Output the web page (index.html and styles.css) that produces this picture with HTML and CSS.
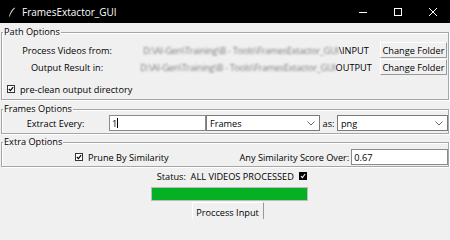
FILE: index.html
```html
<!DOCTYPE html>
<html>
<head>
<meta charset="utf-8">
<link rel="stylesheet" href="styles.css">
</head>
<body>
<div class="window">
  <div class="titlebar">
    <svg class="app-icon" width="8" height="10" viewBox="0 0 8 10"><path d="M6.5 0.5 C4 2 2 5 1 9.5 L1.8 9.5 C2.6 6.5 4.5 3.5 7 1.2 Z" fill="#cfd8e6"/></svg>
    <span class="title">FramesExtactor_GUI</span>
    <div class="controls">
      <span class="ctl"><svg width="10" height="10" viewBox="0 0 10 10"><path d="M1 5.5 H9" stroke="#fff" stroke-width="1"/></svg></span>
      <span class="ctl"><svg width="10" height="10" viewBox="0 0 10 10"><rect x="1.5" y="1.5" width="7" height="7" fill="none" stroke="#fff" stroke-width="1"/></svg></span>
      <span class="ctl"><svg width="10" height="10" viewBox="0 0 10 10"><path d="M1 1 L9 9 M9 1 L1 9" stroke="#fff" stroke-width="1"/></svg></span>
    </div>
  </div>

  <fieldset class="group group-path">
    <legend>Path Options</legend>
    <div class="path-grid">
      <span class="lbl">Process Videos from:</span>
      <span class="path"><span class="blur">D:\AI-Gen\Training\B - Tools\FramesExtactor_GUI</span>\INPUT</span>
      <span class="btn">Change Folder</span>
      <span class="lbl">Output Result in:</span>
      <span class="path"><span class="blur">D:\AI-Gen\Training\B - Tools\FramesExtactor_GUI</span>OUTPUT</span>
      <span class="btn">Change Folder</span>
    </div>
    <div class="check-row clean-row"><span class="cb"><svg width="7" height="7" viewBox="0 0 7 7"><path d="M1 3.5 L2.8 5.4 L6 1.2" fill="none" stroke="#000" stroke-width="1.4"/></svg></span>pre-clean output directory</div>
  </fieldset>

  <fieldset class="group group-frames">
    <legend>Frames Options</legend>
    <div class="frames-row">
      <span class="lbl extract-lbl">Extract Every:</span>
      <span class="entry extract-entry">1<span class="caret"></span></span>
      <span class="combo frames-combo">Frames<svg class="chev" width="8" height="5" viewBox="0 0 8 5"><path d="M0.5 0.5 L4 4 L7.5 0.5" fill="none" stroke="#555" stroke-width="0.9"/></svg></span>
      <span class="as-lbl">as:</span>
      <span class="combo png-combo">png<svg class="chev" width="8" height="5" viewBox="0 0 8 5"><path d="M0.5 0.5 L4 4 L7.5 0.5" fill="none" stroke="#555" stroke-width="0.9"/></svg></span>
    </div>
  </fieldset>

  <fieldset class="group group-extra">
    <legend>Extra Options</legend>
    <div class="extra-row">
      <div class="check-row prune"><span class="cb"><svg width="7" height="7" viewBox="0 0 7 7"><path d="M1 3.5 L2.8 5.4 L6 1.2" fill="none" stroke="#000" stroke-width="1.4"/></svg></span>Prune By Similarity</div>
      <span class="sim-lbl">Any Similarity Score Over:</span>
      <span class="entry sim-entry">0.67</span>
    </div>
  </fieldset>

  <div class="status-area">
    <div class="status-row">Status:&nbsp; ALL VIDEOS PROCESSED <span class="cb cb-dark"><svg width="7" height="7" viewBox="0 0 7 7"><path d="M1 3.5 L2.8 5.4 L6 1.2" fill="none" stroke="#fff" stroke-width="1.2"/></svg></span></div>
    <div class="progress"><div class="progress-fill" style="width:100%"></div></div>
    <span class="btn process-btn">Proccess Input</span>
  </div>
</div>
</body>
</html>
```

FILE: styles.css
```css
* { box-sizing: border-box; }
html, body { margin: 0; padding: 0; }
body {
  background: #f0f0f0;
  font-family: "Open Sans", "Noto Sans", sans-serif;
  font-size: 9.2px;
  color: #000;
  width: 450px;
  height: 219px;
  overflow: hidden;
}
.window { width: 450px; }

.titlebar {
  height: 23px;
  background: #000;
  color: #fff;
  display: flex;
  align-items: center;
}
.app-icon { margin-left: 8px; margin-right: 6px; }
.title { font-size: 10px; }
.controls { margin-left: auto; display: flex; height: 23px; }
.ctl {
  width: 35px;
  display: flex;
  align-items: center;
  justify-content: center;
}

.group {
  margin: 2px 1px 0 1px;
  padding: 0 0 1px 0;
  border: 1px solid #a6a6a6;
  box-shadow: inset 1px 1px 0 #fff, 1px 1px 0 #fff;
  min-width: 0;
}
.group legend {
  padding: 0 1px;
  margin-left: 1px;
  line-height: 12px;
  height: 12px;
}
.group-path { margin-top: 3px; padding-bottom: 2px; }
.group-frames { margin-top: 3px; }

.path-grid {
  display: grid;
  grid-template-columns: 130px 248px 67px;
  row-gap: 1px;
  padding-top: 4px;
  align-items: center;
}
.lbl { text-align: center; }
.path { text-align: center; white-space: nowrap; overflow: hidden; }
.blur { color: #7d7d7d; filter: blur(0.9px); letter-spacing: -0.3px; }

.btn {
  height: 16px;
  display: flex;
  align-items: center;
  justify-content: center;
  background: #f0f0f0;
  border: 1px solid;
  border-color: #fff #9a9a9a #9a9a9a #fff;
  white-space: nowrap;
}

.check-row { display: flex; align-items: center; gap: 5px; height: 14px; }
.clean-row { margin: 7px 0 1px 5px; }
.cb {
  width: 8px;
  height: 8px;
  background: #fff;
  border: 1px solid #333;
  display: inline-flex;
  align-items: center;
  justify-content: center;
}
.cb svg { width: 6px; height: 6px; }
.cb-dark { background: #000; border-color: #000; margin-left: 3px; }

.frames-row {
  display: flex;
  align-items: center;
  height: 16px;
  margin-bottom: 1px;
}
.extract-lbl { width: 107px; text-align: center; }
.entry {
  height: 16px;
  background: #fff;
  border: 1px solid #8a8a8a;
  display: flex;
  align-items: center;
  padding-left: 2px;
}
.extract-entry { width: 97px; }
.caret { display: inline-block; width: 1px; height: 10px; background: #000; }
.combo {
  height: 16px;
  background: #fff;
  border: 1px solid #7a7a7a;
  display: flex;
  align-items: center;
  padding-left: 3px;
}
.chev { margin-left: auto; margin-right: 4px; }
.frames-combo { width: 114px; }
.as-lbl { width: 17px; text-align: center; }
.png-combo { width: 111px; }

.extra-row {
  display: flex;
  align-items: center;
  height: 16px;
  margin-top: 1px;
}
.prune { margin-left: 73px; width: 163px; }
.sim-lbl { width: 114px; text-align: right; padding-right: 2px; }
.sim-entry { width: 97px; height: 16px; }

.status-area {
  display: flex;
  flex-direction: column;
  align-items: center;
}
.status-row {
  margin-top: 3px;
  height: 12px;
  display: flex;
  align-items: center;
  margin-left: 14px;
  white-space: pre;
}
.progress {
  margin-top: 5px;
  width: 157px;
  height: 14px;
  border: 1px solid #bcbcbc;
  background: #e6e6e6;
  margin-left: 8px;
}
.progress-fill { height: 100%; background: #06b025; }
.process-btn {
  margin-top: 1px;
  width: 72px;
  height: 20px;
  margin-left: 5px;
}
```
